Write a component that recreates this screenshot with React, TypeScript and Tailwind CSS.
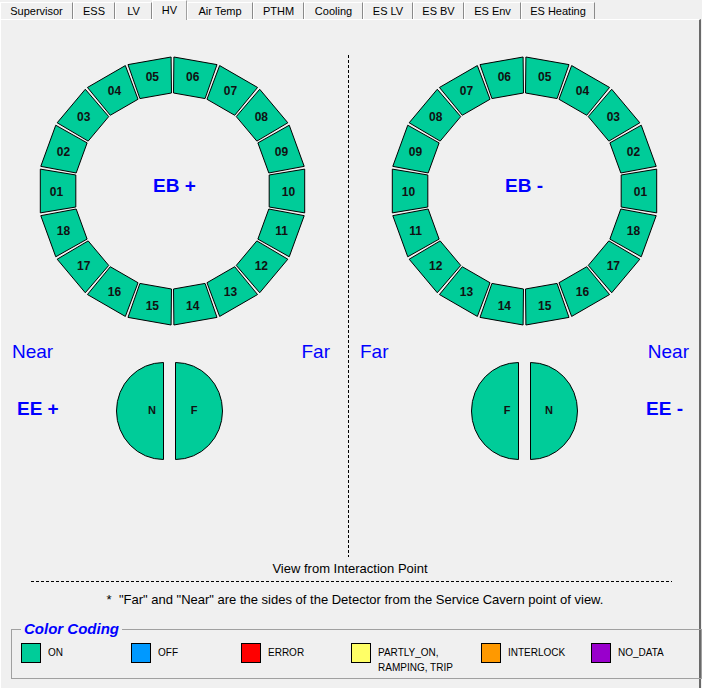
import React from "react";

const ON = "#00cc99";

const tabs = [
  { label: "Supervisor", w: "w-[73px]" },
  { label: "ESS", w: "w-[42px]" },
  { label: "LV", w: "w-[37px]" },
  { label: "HV", w: "w-[35px]", active: true },
  { label: "Air Temp", w: "w-[66px]" },
  { label: "PTHM", w: "w-[51px]" },
  { label: "Cooling", w: "w-[59px]" },
  { label: "ES LV", w: "w-[50px]" },
  { label: "ES BV", w: "w-[51px]" },
  { label: "ES Env", w: "w-[57px]" },
  { label: "ES Heating", w: "w-[74px]" },
];

const legend = [
  { color: "bg-[#00cc99]", text: "ON", w: "w-[110px]" },
  { color: "bg-[#0099ff]", text: "OFF", w: "w-[110px]" },
  { color: "bg-[#ff0000]", text: "ERROR", w: "w-[110px]" },
  { color: "bg-[#ffff66]", text: "PARTLY_ON,\nRAMPING, TRIP", w: "w-[130px]" },
  { color: "bg-[#ff9900]", text: "INTERLOCK", w: "w-[110px]" },
  { color: "bg-[#9900cc]", text: "NO_DATA", w: "w-[110px]" },
];

const R_OUT = 134;
const R_IN = 98;
const HALF = 9.4;
const FONT = "'Liberation Sans', Arial, sans-serif";

function pt(cx: number, cy: number, r: number, deg: number) {
  const a = (deg * Math.PI) / 180;
  return [cx + r * Math.cos(a), cy + r * Math.sin(a)];
}

// 18 barrel supermodules drawn as a ring of trapezoids
function Ring({ width, cx, cy, mirror }: { width: number; cx: number; cy: number; mirror?: boolean }) {
  const segs = Array.from({ length: 18 }, (_, i) => {
    const ang = mirror ? -i * 20 : 180 + i * 20;
    const corners = [
      pt(cx, cy, R_OUT, ang - HALF),
      pt(cx, cy, R_OUT, ang + HALF),
      pt(cx, cy, R_IN, ang + HALF),
      pt(cx, cy, R_IN, ang - HALF),
    ];
    const [lx, ly] = pt(cx, cy, (R_OUT + R_IN) / 2, ang);
    return { n: String(i + 1).padStart(2, "0"), points: corners.map((c) => c.join(",")).join(" "), lx, ly };
  });
  return (
    <svg width={width} height={287} className="block">
      {segs.map((s) => (
        <g key={s.n}>
          <polygon points={s.points} fill={ON} stroke="#000" strokeWidth={1} />
          <text
            x={s.lx}
            y={s.ly + 4.5}
            textAnchor="middle"
            fontSize={12}
            fontWeight="bold"
            fill="#111"
            fontFamily={FONT}
          >
            {s.n}
          </text>
        </g>
      ))}
    </svg>
  );
}

function Halves({ left, right }: { left: string; right: string }) {
  return (
    <svg width={108} height={99} className="block">
      <path d="M47.5 0.5 A47 48.5 0 0 0 47.5 97.5 Z" fill={ON} stroke="#000" strokeWidth={1} />
      <path d="M59.5 0.5 A47 48.5 0 0 1 59.5 97.5 Z" fill={ON} stroke="#000" strokeWidth={1} />
      <text x={36} y={52} textAnchor="middle" fontSize={11} fontWeight="bold" fill="#111" fontFamily={FONT}>
        {left}
      </text>
      <text x={78} y={52} textAnchor="middle" fontSize={11} fontWeight="bold" fill="#111" fontFamily={FONT}>
        {right}
      </text>
    </svg>
  );
}

export default function App() {
  return (
    <div className="w-[702px] h-[688px] bg-[#f0f0f0] overflow-hidden font-['Liberation_Sans',Arial,sans-serif] text-black">
      {/* Tab strip */}
      <div className="flex h-[19px] items-end relative z-10">
        {tabs.map((t) =>
          t.active ? (
            <div
              key={t.label}
              className={`${t.w} h-[20px] -mb-px bg-[#f0f0f0] border-t border-l border-white border-r border-r-[#a0a0a0] flex items-center justify-center text-[11px] leading-none`}
            >
              {t.label}
            </div>
          ) : (
            <div
              key={t.label}
              className={`${t.w} h-[17px] bg-[#f0f0f0] border-t border-l border-white border-r border-r-[#8a8a8a] flex items-center justify-center text-[11px] leading-none pt-px`}
            >
              {t.label}
            </div>
          )
        )}
      </div>

      {/* Panel */}
      <div className="w-[701px] h-[669px] border-t border-l border-white border-r-2 border-r-[#696969] flex flex-col">
        <div className="mt-[35px] flex h-[502px]">
          {/* EB+ / EE+ */}
          <div className="w-[347px] flex flex-col">
            <div className="relative">
              <Ring width={347} cx={171.5} cy={136} />
              <div className="absolute left-0 right-0 top-[121px] text-center text-[19px] leading-[20px] font-bold text-[#0000ff]">
                EB +
              </div>
            </div>
            <div className="h-[20px] flex justify-between pl-[11px] pr-[18px] text-[19px] leading-[20px] text-[#0000ff]">
              <span>Near</span>
              <span>Far</span>
            </div>
            <div className="grid grid-cols-[115px_108px_1fr] items-center">
              <span className="pl-[16px] mb-[6px] text-[19px] leading-[20px] font-bold text-[#0000ff]">EE +</span>
              <Halves left="N" right="F" />
              <span />
            </div>
          </div>

          {/* divider */}
          <div className="w-px h-full bg-[repeating-linear-gradient(to_bottom,#000_0_3px,transparent_3px_5px)]" />

          {/* EB- / EE- */}
          <div className="w-[350px] flex flex-col">
            <div className="relative">
              <Ring width={350} cx={175.5} cy={136} mirror />
              <div className="absolute left-0 right-0 top-[121px] text-center text-[19px] leading-[20px] font-bold text-[#0000ff]">
                EB -
              </div>
            </div>
            <div className="h-[20px] flex justify-between pl-[11px] pr-[10px] text-[19px] leading-[20px] text-[#0000ff]">
              <span>Far</span>
              <span>Near</span>
            </div>
            <div className="grid grid-cols-[122px_108px_1fr] items-center">
              <span />
              <Halves left="F" right="N" />
              <span className="text-right pr-[16px] mb-[6px] text-[19px] leading-[20px] font-bold text-[#0000ff]">EE -</span>
            </div>
          </div>
        </div>

        <div className="mt-[4px] h-[15px] text-center text-[13px] leading-[15px]">View from Interaction Point</div>
        <div className="mt-[5px] ml-[30px] w-[641px] h-px bg-[repeating-linear-gradient(to_right,#000_0_3px,transparent_3px_5px)]" />
        <div className="mt-[10px] h-[15px] pl-[10px] text-center text-[13px] leading-[15px] whitespace-pre">
          {'*  "Far" and "Near" are the sides of the Detector from the Service Cavern point of view.'}
        </div>

        <fieldset className="mt-[13px] ml-[10px] w-[681px] h-[59px] border border-[#a0a0a0] pl-[9px] pt-[5px]">
          <legend className="px-[3px] text-[15px] leading-[18px] font-bold italic text-[#0000ff]">Color Coding</legend>
          <div className="flex">
            {legend.map((l) => (
              <div key={l.text} className={`${l.w} flex items-start gap-[7px]`}>
                <div className={`w-[20px] h-[20px] shrink-0 border border-black ${l.color}`} />
                <div className="mt-[2px] text-[10px] leading-[15px] whitespace-pre">{l.text}</div>
              </div>
            ))}
          </div>
        </fieldset>
      </div>
    </div>
  );
}
